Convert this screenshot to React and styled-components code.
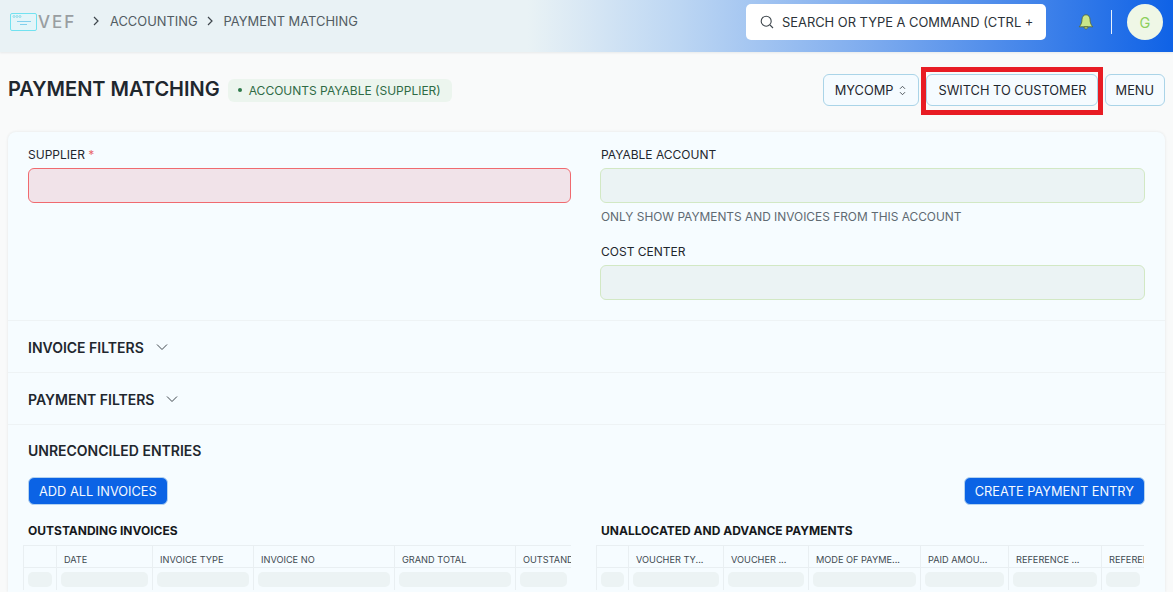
import React from 'react';
import styled, { createGlobalStyle } from 'styled-components';

const GlobalStyle = createGlobalStyle`
  html, body {
    margin: 0;
    height: 100%;
    overflow: hidden;
    background: #f9fafa;
    font-family: Inter, "Liberation Sans", sans-serif;
    color: #1f272e;
  }
  * { box-sizing: border-box; }
`;

const Page = styled.div`
  width: 1173px;
  height: 592px;
  overflow: hidden;
`;

const Navbar = styled.header`
  height: 52px;
  display: flex;
  align-items: center;
  padding: 0 10px 8px 10px;
  background: linear-gradient(90deg, #e9f2f5 0%, #e9f2f5 45%, #bcd6f3 58%, #7aa9ee 75%, #0f62e6 100%);
  box-shadow: 0 1px 2px rgba(25, 39, 52, 0.08);
`;

const Logo = styled.div`
  display: flex;
  align-items: center;
  width: 82px;
  flex-shrink: 0;
`;

const LogoWord = styled.span`
  font-size: 17px;
  font-weight: 500;
  line-height: 18px;
  color: #999ea1;
  margin-left: 1px;
  letter-spacing: 2px;
`;

const Crumbs = styled.nav`
  display: flex;
  align-items: center;
  flex: 1;
  font-size: 12.9px;
  color: #525c63;
  margin-top: -2px;
`;

const CrumbArrow = styled.svg`
  width: 8px;
  height: 10px;
  margin-right: 10px;
`;

const Crumb = styled.span`
  margin-right: 8px;
`;

const Search = styled.div`
  width: 300px;
  height: 36px;
  background: #fff;
  border-radius: 5px;
  display: flex;
  align-items: center;
  gap: 8px;
  padding: 0 13px 0 14px;
  font-size: 12.9px;
  color: #2b3238;
  white-space: nowrap;
  overflow: hidden;
`;

const NavRight = styled.div`
  display: flex;
  align-items: center;
  margin-left: 32px;
`;

const Divider = styled.div`
  width: 1px;
  height: 24px;
  background: #e8f1fc;
  margin: 0 15px 0 17px;
`;

const Avatar = styled.div`
  width: 36px;
  height: 36px;
  border-radius: 50%;
  background: #eff7e6;
  color: #8ccf5c;
  display: flex;
  align-items: center;
  justify-content: center;
  font-size: 14.5px;
`;

const TitleRow = styled.div`
  height: 80px;
  display: flex;
  align-items: center;
  padding: 3px 8px 0;
`;

const Title = styled.h1`
  margin: 0;
  font-size: 20px;
  line-height: 24px;
  font-weight: 600;
  color: #1f272e;
  margin-top: -9px;
`;

const Indicator = styled.div`
  margin-left: 8px;
  height: 23px;
  padding: 0 11px 0 10px;
  display: flex;
  align-items: center;
  gap: 7px;
  border-radius: 6px;
  background: #ecf5ee;
  color: #2f6b45;
  font-size: 12px;
  margin-top: -7px;
`;

const Dot = styled.span`
  width: 4px;
  height: 4px;
  border-radius: 50%;
  background: #2f7a4a;
`;

const Actions = styled.div`
  margin-left: auto;
  display: flex;
  align-items: center;
  gap: 7px;
  margin-top: -7px;
`;

const ActionButton = styled.button`
  height: 32px;
  padding: 0 ${p => p.$right || 10}px 0 ${p => p.$left || 11}px;
  display: flex;
  align-items: center;
  gap: 6px;
  background: #f5fbff;
  border: 1px solid #aad4e8;
  border-radius: 6px;
  font-family: inherit;
  font-size: 12.8px;
  color: #1f272e;
  white-space: nowrap;
`;

const Highlight = styled.div`
  position: relative;
  &::after {
    content: '';
    position: absolute;
    inset: -7px -5px -9px -5px;
    border: 5px solid #e81c24;
    pointer-events: none;
  }
`;

const Card = styled.main`
  margin: 0 8px;
  background: #f6fcff;
  border-radius: 8px 8px 0 0;
  box-shadow: 0 0 3px rgba(25, 39, 52, 0.1);
  height: 460px;
  overflow: hidden;
`;

const FormSection = styled.section`
  display: grid;
  grid-template-columns: 543px 545px;
  column-gap: 29px;
  padding: 16px 20px 20px;
  height: 189px;
  border-bottom: 1px solid #eef3f5;
`;

const Column = styled.div`
  display: flex;
  flex-direction: column;
`;

const Label = styled.label`
  font-size: 12px;
  line-height: 14px;
  color: #1f272e;
  margin-bottom: 6px;
  padding-left: ${p => (p.$indent ? '1px' : '0')};
`;

const Required = styled.span`
  color: #e9686d;
`;

const Input = styled.div`
  height: 35px;
  border-radius: 6px;
  background: ${p => (p.$error ? '#f1e3e9' : '#ebf3f4')};
  border: 1px solid ${p => (p.$error ? '#f06a6f' : '#d2e8c4')};
`;

const Help = styled.div`
  margin: 7px 0 21px;
  padding-left: 1px;
  font-size: 11.9px;
  line-height: 14px;
  color: #5f6a72;
`;

const Collapse = styled.div`
  height: 52px;
  padding: 1px 20px 0;
  display: flex;
  align-items: center;
  gap: 12px;
  border-bottom: 1px solid #eef3f5;
  font-size: 14px;
  font-weight: 600;
  color: #1f272e;
`;

const Entries = styled.section`
  padding: 17px 20px 0;
`;

const SectionHead = styled.div`
  font-size: 14px;
  line-height: 17px;
  font-weight: 600;
  color: #1f272e;
`;

const ButtonRow = styled.div`
  display: flex;
  justify-content: space-between;
  margin-top: 18px;
`;

const PrimaryButton = styled.button`
  height: 28px;
  padding: 0 10px;
  border-radius: 6px;
  border: 1px solid #b4d3f0;
  background: #0b63e5;
  color: #f5f9ff;
  font-family: inherit;
  font-size: 12.8px;
  white-space: nowrap;
`;

const Tables = styled.div`
  display: grid;
  grid-template-columns: 548px 548px;
  column-gap: 25px;
  margin: 19px 0 0 -5px;
`;

const TableTitle = styled.div`
  font-size: 12px;
  line-height: 14px;
  font-weight: 700;
  color: #16191c;
  margin: 0 0 7px 5px;
`;

const Table = styled.div`
  border-left: 1px solid #e9eff2;
  border-top: 1px solid #e9eff2;
  overflow: hidden;
`;

const Row = styled.div`
  display: flex;
  height: ${p => p.$h}px;
  border-bottom: ${p => (p.$line ? '1px solid #e9eff2' : 'none')};
`;

const Cell = styled.div`
  flex: 0 0 auto;
  width: ${p => p.$w}px;
  padding: 0 4px;
  border-right: 1px solid #e9eff2;
  display: flex;
  align-items: center;
  font-size: 9.2px;
  color: #414a51;
  white-space: nowrap;
  overflow: hidden;
  & > span { padding: 5px 3px 0 3px; }
`;

const Skeleton = styled.div`
  width: 100%;
  height: 15px;
  border-radius: 5px;
  background: #ecf3f4;
`;

const Chevron = () => (
  <svg width="12" height="8" viewBox="0 0 12 8" fill="none" stroke="#3f474d" strokeWidth="1">
    <path d="M1 1.5l5 5 5-5" />
  </svg>
);

const Arrow = () => (
  <CrumbArrow viewBox="0 0 8 10" fill="none" stroke="#3f474d" strokeWidth="1.2">
    <path d="M2 1l4 4-4 4" />
  </CrumbArrow>
);

const invoiceCols = [
  ['', 33],
  ['DATE', 96],
  ['INVOICE TYPE', 101],
  ['INVOICE NO', 141],
  ['GRAND TOTAL', 121],
  ['OUTSTANDING AMOUNT', 56],
];

const paymentCols = [
  ['', 32],
  ['VOUCHER TY...', 95],
  ['VOUCHER ...', 85],
  ['MODE OF PAYME...', 112],
  ['PAID AMOU...', 88],
  ['REFERENCE ...', 93],
  ['REFERENCE', 43],
];

const GridTable = ({ title, cols }) => (
  <div>
    <TableTitle>{title}</TableTitle>
    <Table>
      <Row $h={22} $line>
        {cols.map(([name, w], i) => (
          <Cell key={i} $w={w}><span>{name}</span></Cell>
        ))}
      </Row>
      <Row $h={22}>
        {cols.map(([name, w], i) => (
          <Cell key={i} $w={w}><Skeleton /></Cell>
        ))}
      </Row>
    </Table>
  </div>
);

export default function App() {
  return (
    <Page>
      <GlobalStyle />
      <Navbar>
        <Logo>
          <svg width="27" height="18" viewBox="0 0 27 18" fill="none">
            <rect x="0.5" y="0.5" width="26" height="17" rx="1.5" fill="#e3f5f9" stroke="#72e2f0" strokeWidth="1" />
            <circle cx="4" cy="3.5" r="1" stroke="#62cfe0" strokeWidth="0.6" />
            <circle cx="7" cy="3.5" r="1" stroke="#62cfe0" strokeWidth="0.6" />
            <circle cx="10" cy="3.5" r="1" stroke="#62cfe0" strokeWidth="0.6" />
            <path d="M7 8.5h14M10 11.5h7" stroke="#68c6ea" strokeWidth="0.8" />
          </svg>
          <LogoWord>VEF</LogoWord>
        </Logo>
        <Crumbs>
          <Arrow />
          <Crumb>ACCOUNTING</Crumb>
          <Arrow />
          <Crumb>PAYMENT MATCHING</Crumb>
        </Crumbs>
        <Search>
          <svg width="14" height="14" viewBox="0 0 14 14" fill="none" stroke="#3f474d" strokeWidth="1.1" style={{ flexShrink: 0 }}>
            <circle cx="6.2" cy="6.2" r="5" />
            <path d="M10 10l3 3" />
          </svg>
          SEARCH OR TYPE A COMMAND (CTRL +
        </Search>
        <NavRight>
          <svg width="16" height="16" viewBox="0 0 16 16" fill="#cbe68a" stroke="#56662f" strokeWidth="0.8" style={{ flexShrink: 0 }}>
            <path d="M8 .8C5.4.8 4 3 4 5.6c0 3.4-1.3 5.6-2.8 7.2h13.6C13.3 11.2 12 9 12 5.6 12 3 10.6.8 8 .8z" />
            <path d="M6 13c.2 2.6 3.8 2.6 4 0z" />
          </svg>
          <Divider />
          <Avatar>G</Avatar>
        </NavRight>
      </Navbar>
      <TitleRow>
        <Title>PAYMENT MATCHING</Title>
        <Indicator><Dot />ACCOUNTS PAYABLE (SUPPLIER)</Indicator>
        <Actions>
          <ActionButton $right={12}>
            MYCOMP
            <svg width="7" height="11" viewBox="0 0 7 11" fill="none" stroke="#3f474d" strokeWidth="0.9">
              <path d="M1 3.8l2.5-2.5L6 3.8M1 7.2l2.5 2.5L6 7.2" />
            </svg>
          </ActionButton>
          <Highlight><ActionButton>SWITCH TO CUSTOMER</ActionButton></Highlight>
          <ActionButton $left={10}>MENU</ActionButton>
        </Actions>
      </TitleRow>
      <Card>
        <FormSection>
          <Column>
            <Label>SUPPLIER <Required>*</Required></Label>
            <Input $error />
          </Column>
          <Column>
            <Label $indent>PAYABLE ACCOUNT</Label>
            <Input />
            <Help>ONLY SHOW PAYMENTS AND INVOICES FROM THIS ACCOUNT</Help>
            <Label $indent>COST CENTER</Label>
            <Input />
          </Column>
        </FormSection>
        <Collapse>INVOICE FILTERS <Chevron /></Collapse>
        <Collapse>PAYMENT FILTERS <Chevron /></Collapse>
        <Entries>
          <SectionHead>UNRECONCILED ENTRIES</SectionHead>
          <ButtonRow>
            <PrimaryButton>ADD ALL INVOICES</PrimaryButton>
            <PrimaryButton>CREATE PAYMENT ENTRY</PrimaryButton>
          </ButtonRow>
          <Tables>
            <GridTable title="OUTSTANDING INVOICES" cols={invoiceCols} />
            <GridTable title="UNALLOCATED AND ADVANCE PAYMENTS" cols={paymentCols} />
          </Tables>
        </Entries>
      </Card>
    </Page>
  );
}
